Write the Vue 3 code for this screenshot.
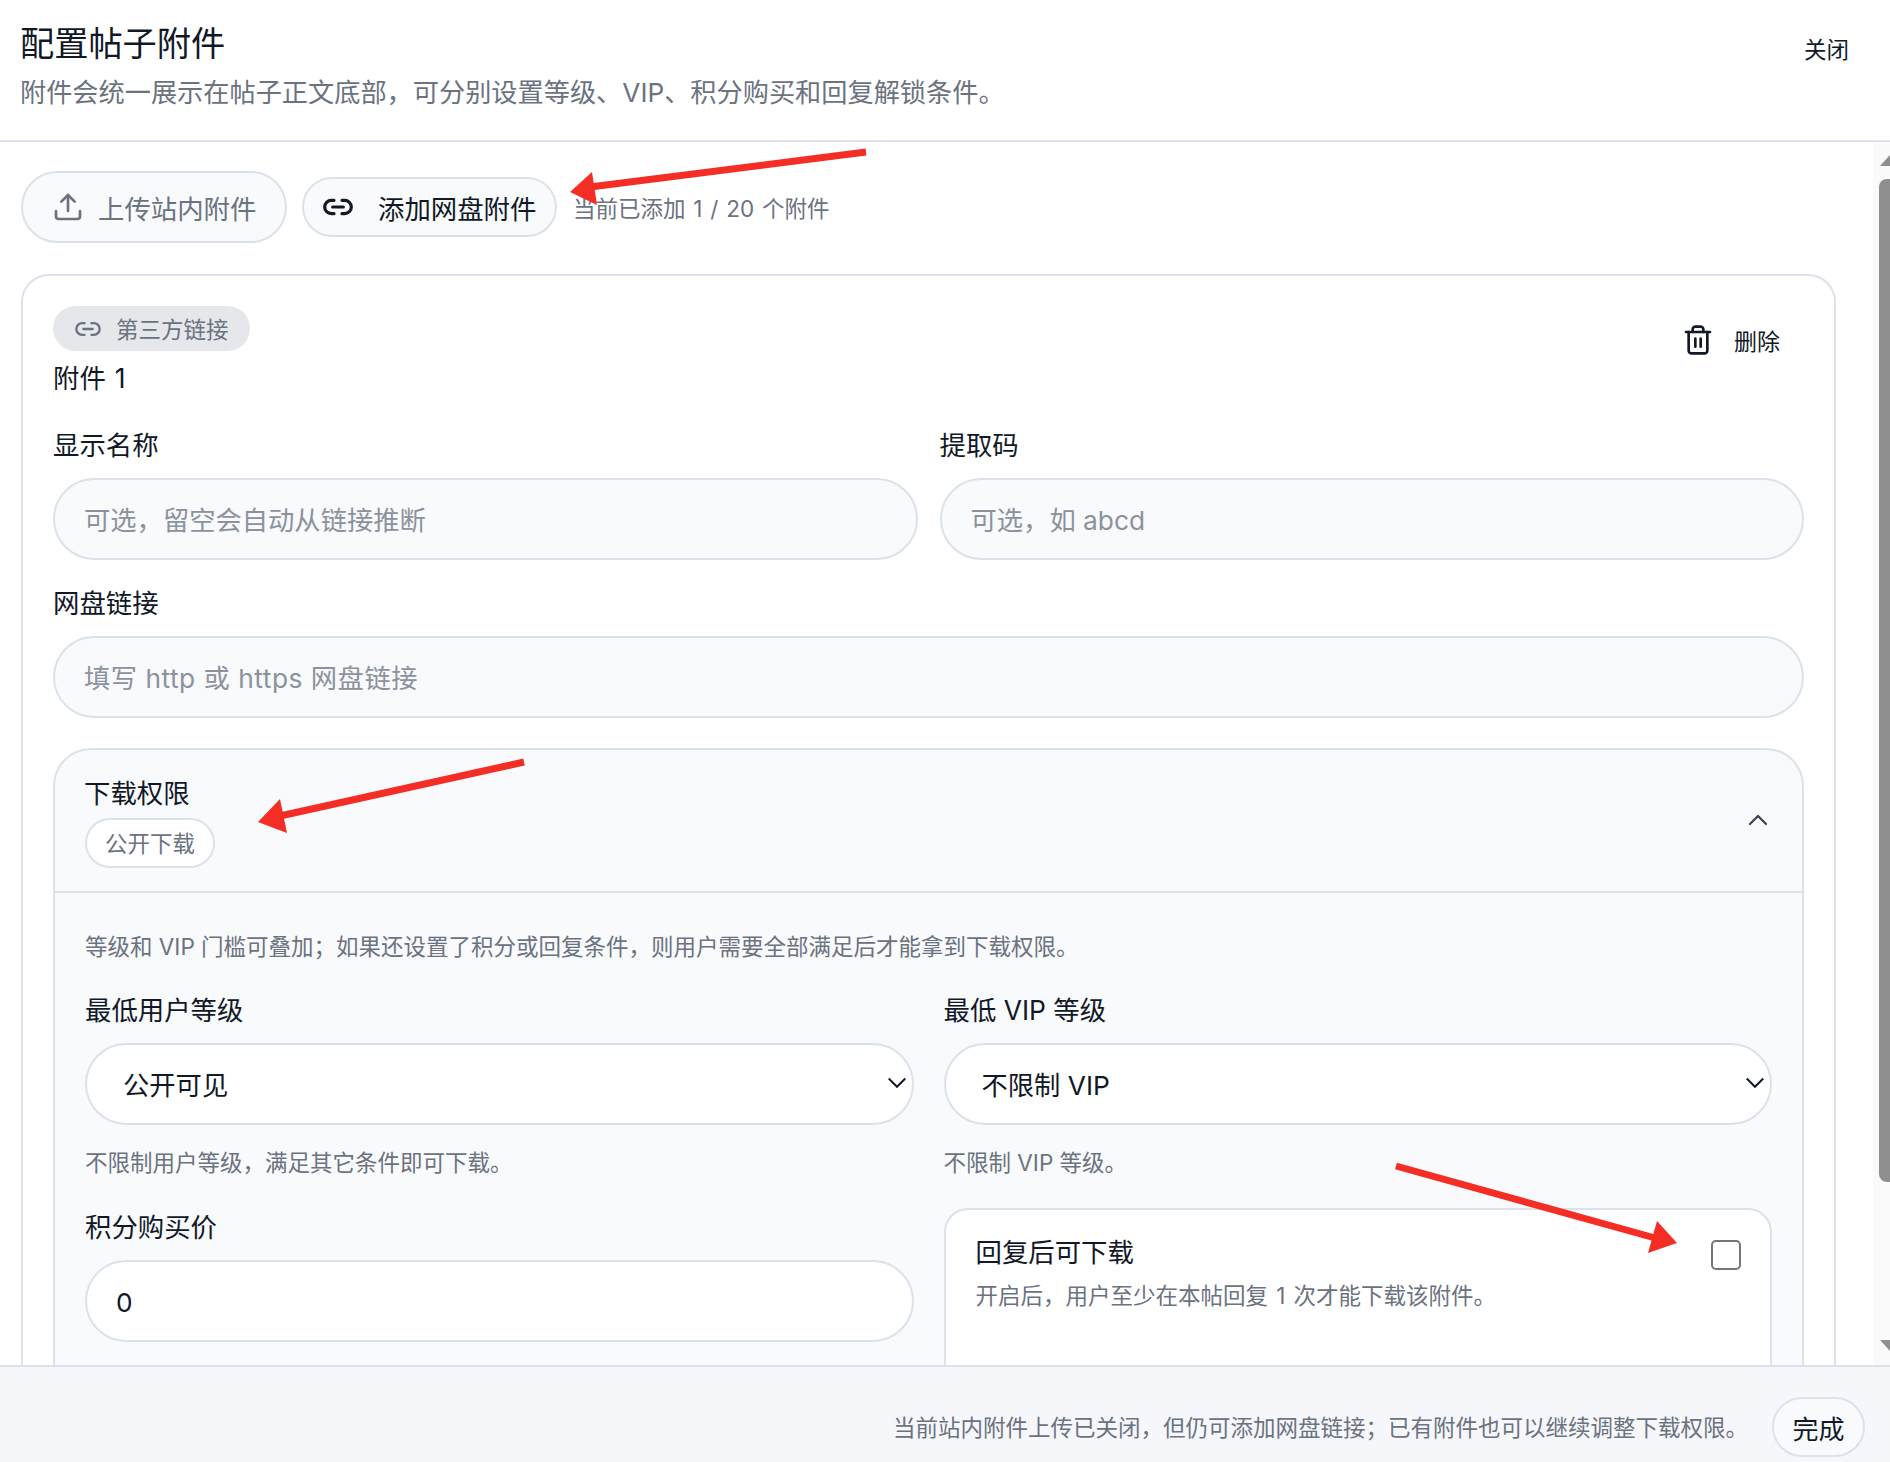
<template>
  <div class="page">
    <header class="top">
      <div>
        <h1 class="top__title">配置帖子附件</h1>
        <p class="top__desc">附件会统一展示在帖子正文底部，可分别设置等级、VIP、积分购买和回复解锁条件。</p>
      </div>
      <button class="top__close">关闭</button>
    </header>

    <div class="middle">
      <main class="scroll">
        <div class="toolbar">
          <button class="tool-btn tool-btn--upload">
            <svg class="icon32" viewBox="0 0 24 24"><path d="M21 15v4a2 2 0 0 1-2 2H5a2 2 0 0 1-2-2v-4" /><path d="M17 8l-5-5-5 5" /><path d="M12 3v12" /></svg>
            上传站内附件
          </button>
          <button class="tool-btn tool-btn--link">
            <svg class="icon32" viewBox="0 0 24 24"><path d="M9 17H7A5 5 0 0 1 7 7h2" /><path d="M15 7h2a5 5 0 1 1 0 10h-2" /><path d="M8 12h8" /></svg>
            添加网盘附件
          </button>
          <span class="toolbar__count">当前已添加 1 / 20 个附件</span>
        </div>

        <section class="card">
          <div class="card__head">
            <div>
              <span class="chip">
                <svg class="chip__icon" viewBox="0 0 24 24"><path d="M9 17H7A5 5 0 0 1 7 7h2" /><path d="M15 7h2a5 5 0 1 1 0 10h-2" /><path d="M8 12h8" /></svg>
                <span class="chip__text">第三方链接</span>
              </span>
              <p class="card__name">附件 1</p>
            </div>
            <button class="del-btn">
              <svg class="icon32" viewBox="0 0 24 24"><path d="M3 6h18" /><path d="M19 6v14c0 1-1 2-2 2H7c-1 0-2-1-2-2V6" /><path d="M8 6V4c0-1 1-2 2-2h4c1 0 2 1 2 2v2" /><path d="M10 11v6" /><path d="M14 11v6" /></svg>
              删除
            </button>
          </div>

          <div class="fields">
            <label class="field">
              <span class="field__label">显示名称</span>
              <input class="pill" placeholder="可选，留空会自动从链接推断" />
            </label>
            <label class="field">
              <span class="field__label">提取码</span>
              <input class="pill" placeholder="可选，如 abcd" />
            </label>
            <label class="field field--wide">
              <span class="field__label">网盘链接</span>
              <input class="pill pill--url" placeholder="填写 http 或 https 网盘链接" />
            </label>
          </div>

          <section class="perm">
            <div class="perm__head">
              <div>
                <p class="perm__title">下载权限</p>
                <span class="tag">公开下载</span>
              </div>
              <svg class="perm__chev" viewBox="0 0 24 24"><path d="M18 15l-6-6-6 6" /></svg>
            </div>
            <div class="perm__body">
              <p class="hint perm__hint">等级和 VIP 门槛可叠加；如果还设置了积分或回复条件，则用户需要全部满足后才能拿到下载权限。</p>
              <div class="perm__grid">
                <div class="field">
                  <span class="field__label">最低用户等级</span>
                  <div class="select-wrap">
                    <select class="pill pill--select"><option>公开可见</option></select>
                    <svg class="select-wrap__chev" viewBox="0 0 16 16"><path d="M2.500 5l5.500 5.500L13.500 5" /></svg>
                  </div>
                  <p class="hint field__hint">不限制用户等级，满足其它条件即可下载。</p>
                </div>
                <div class="field">
                  <span class="field__label">最低 VIP 等级</span>
                  <div class="select-wrap">
                    <select class="pill pill--select"><option>不限制 VIP</option></select>
                    <svg class="select-wrap__chev" viewBox="0 0 16 16"><path d="M2.500 5l5.500 5.500L13.500 5" /></svg>
                  </div>
                  <p class="hint field__hint">不限制 VIP 等级。</p>
                </div>
                <div class="field">
                  <span class="field__label">积分购买价</span>
                  <input class="pill pill--value" value="0" />
                </div>
                <div class="reply-box">
                  <div>
                    <p class="reply-box__title">回复后可下载</p>
                    <p class="hint reply-box__desc">开启后，用户至少在本帖回复 1 次才能下载该附件。</p>
                  </div>
                  <input class="check" type="checkbox" />
                </div>
              </div>
            </div>
          </section>
        </section>
      </main>

      <div class="rail">
        <span class="rail__up"></span>
        <span class="rail__thumb"></span>
        <span class="rail__down"></span>
      </div>
    </div>

    <footer class="bottom">
      <span class="bottom__text">当前站内附件上传已关闭，但仍可添加网盘链接；已有附件也可以继续调整下载权限。</span>
      <button class="bottom__done">完成</button>
    </footer>

    <!-- annotation arrows drawn on top of the screenshot -->
    <svg class="arrows" viewBox="0 0 1890 1462">
      <path d="M866 152L590 187" />
      <polygon points="570,192 592,172 597,205" />
      <path d="M524 762L280 816" />
      <polygon points="258,822 280,799 287,833" />
      <path d="M1396 1166L1655 1238" />
      <polygon points="1677,1243 1657,1221 1648,1253" />
    </svg>
  </div>
</template>

<script setup>
</script>

<style scoped>
.page {
  position: relative;
  width: 1890px;
  height: 1462px;
  display: flex;
  flex-direction: column;
  overflow: hidden;
  background: #fff;
  color: #111827;
  font-family: Inter, "Noto Sans CJK SC", sans-serif;
}
p, h1 {
  margin: 0;
}
button {
  font-family: inherit;
  cursor: pointer;
}
.icon32 {
  width: 32px;
  height: 32px;
  flex-shrink: 0;
  fill: none;
  stroke: currentColor;
  stroke-width: 2;
  stroke-linecap: round;
  stroke-linejoin: round;
}

.top {
  height: 142px;
  flex-shrink: 0;
  box-sizing: border-box;
  border-bottom: 2px solid #dde3ee;
  padding: 21px 41px 0 20px;
  display: flex;
  justify-content: space-between;
  align-items: flex-start;
}
.top__title {
  font-size: 34.2px;
  line-height: 46px;
  font-weight: 400;
}
.top__desc {
  margin-top: 8px;
  font-size: 26.2px;
  line-height: 36px;
  color: #6b7280;
}
.top__close {
  margin-top: 12px;
  padding: 0;
  border: none;
  background: none;
  font-size: 22.5px;
  line-height: 34px;
  color: #111827;
}

.middle {
  flex: 1;
  min-height: 0;
  display: flex;
}
.scroll {
  flex: 1;
  min-width: 0;
  overflow: hidden;
  padding: 29px 37px 0 21px;
}
.rail {
  width: 17px;
  flex-shrink: 0;
  display: flex;
  flex-direction: column;
  align-items: flex-end;
  background: #fafafa;
}
.rail__up, .rail__down {
  width: 0;
  height: 0;
  border-left: 10px solid transparent;
}
.rail__up {
  margin-top: 13px;
  border-bottom: 11px solid #8f8f8f;
}
.rail__down {
  margin-top: 158px;
  border-top: 11px solid #8f8f8f;
}
.rail__thumb {
  width: 11px;
  height: 1003px;
  margin-top: 13px;
  border-radius: 8px 0 0 8px;
  background: #8f8f8f;
}

.toolbar {
  display: flex;
  align-items: center;
  height: 72px;
}
.tool-btn {
  display: inline-flex;
  align-items: center;
  box-sizing: border-box;
  border: 2px solid #dbe2ec;
  background: #f8fafc;
  font-size: 26.4px;
}
.tool-btn--upload {
  height: 72px;
  width: 266px;
  padding: 0 0 0 29px;
  gap: 14px;
  border-radius: 36px;
  color: #6b7280;
}
.tool-btn--link {
  height: 60px;
  width: 255px;
  margin-left: 15px;
  padding: 0 0 0 18px;
  gap: 24px;
  border-radius: 30px;
  color: #111827;
}
.tool-btn--link .icon32 {
  stroke-width: 2.4;
}
.toolbar__count {
  margin-left: 16px;
  font-size: 22.5px;
  word-spacing: 1.5px;
  color: #6b7280;
}

.card {
  margin-top: 31px;
  border: 2px solid #dbe2ec;
  border-radius: 28px;
  padding: 30px 30px 40px 30px;
}
.card__head {
  display: flex;
  justify-content: space-between;
  align-items: flex-start;
}
.chip {
  display: inline-flex;
  align-items: center;
  height: 45px;
  padding: 0 21px;
  gap: 14px;
  border-radius: 23px;
  background: #e5e7eb;
  font-size: 22.5px;
  color: #6b7280;
}
.chip__icon {
  width: 28px;
  height: 28px;
  fill: none;
  stroke: currentColor;
  stroke-width: 2;
  stroke-linecap: round;
  stroke-linejoin: round;
}
.chip__text {
  margin-top: -2px;
}
.card__name {
  margin-top: 9px;
  font-size: 26.4px;
  line-height: 36px;
  word-spacing: 1.5px;
}
.del-btn {
  display: inline-flex;
  align-items: center;
  gap: 20px;
  margin: 17px 24px 0 0;
  padding: 0;
  border: none;
  background: none;
  font-size: 23px;
  color: #111827;
}

.fields {
  margin-top: 31px;
  display: grid;
  grid-template-columns: 1fr 1fr;
  gap: 25px 22px;
}
.field {
  display: block;
  min-width: 0;
}
.field--wide {
  grid-column: 1 / -1;
}
.field__label {
  display: block;
  margin-bottom: 14px;
  font-size: 26.4px;
  line-height: 37px;
  color: #111827;
}
.field__hint {
  margin-top: 21px;
}
.pill {
  display: block;
  width: 100%;
  height: 82px;
  box-sizing: border-box;
  border: 2px solid #dbe2ec;
  border-radius: 41px;
  padding: 2px 29px 0;
  background: #f8fafc;
  font-family: inherit;
  font-size: 26.3px;
  color: #111827;
  outline: none;
}
.pill::placeholder {
  color: #8b929e;
  opacity: 1;
}
.pill--url::placeholder {
  letter-spacing: 0.5px;
}
.pill--value {
  background: #fff;
}
.pill--select {
  appearance: none;
  padding: 2px 36px 0;
  background: #fff;
}
.select-wrap {
  position: relative;
}
.select-wrap__chev {
  position: absolute;
  right: 5px;
  top: 28px;
  width: 24px;
  height: 24px;
  fill: none;
  stroke: #111827;
  stroke-width: 1.3;
}

.perm {
  margin-top: 30px;
  border: 2px solid #dbe2ec;
  border-radius: 38px;
  background: #f8fafc;
}
.perm__head {
  display: flex;
  justify-content: space-between;
  align-items: center;
  padding: 24px 28px 23px 29px;
  border-bottom: 2px solid #dbe2ec;
}
.perm__title {
  font-size: 26.4px;
  line-height: 38px;
}
.perm__chev {
  width: 32px;
  height: 32px;
  margin-top: -2px;
  fill: none;
  stroke: #374151;
  stroke-width: 1.6;
  stroke-linecap: round;
  stroke-linejoin: round;
}
.tag {
  display: inline-flex;
  align-items: center;
  height: 50px;
  box-sizing: border-box;
  margin: 6px 0 0 1px;
  padding: 0 18px 2px;
  border: 2px solid #dbe2ec;
  border-radius: 25px;
  background: #fff;
  font-size: 22.5px;
  color: #6b7280;
}
.perm__body {
  padding: 37px 30px 40px 30px;
}
.hint {
  font-size: 22.5px;
  line-height: 34px;
  color: #6b7280;
}
.perm__grid {
  margin-top: 28px;
  display: grid;
  grid-template-columns: 1fr 1fr;
  gap: 29px 30px;
}
.reply-box {
  min-height: 200px;
  margin-top: -1px;
  box-sizing: border-box;
  border: 2px solid #dbe2ec;
  border-radius: 24px;
  background: #fff;
  padding: 24px 30px 30px 30px;
  display: flex;
  justify-content: space-between;
  align-items: flex-start;
}
.reply-box__title {
  font-size: 26.4px;
  line-height: 36px;
}
.reply-box__desc {
  margin-top: 9px;
  word-spacing: 1.8px;
}
.check {
  appearance: none;
  width: 30px;
  height: 30px;
  margin: 6px -1px 0 0;
  box-sizing: border-box;
  border: 2px solid #767676;
  border-radius: 5px;
  background: #fff;
}

.bottom {
  height: 97px;
  flex-shrink: 0;
  box-sizing: border-box;
  border-top: 2px solid #dbe2ec;
  background: #f5f7fa;
  padding: 30px 25px 0 0;
  display: flex;
  justify-content: flex-end;
  align-items: flex-start;
  gap: 24px;
}
.bottom__text {
  font-size: 22.5px;
  line-height: 62px;
  color: #6b7280;
}
.bottom__done {
  width: 93px;
  height: 60px;
  padding: 0;
  border: 2px solid #dbe2ec;
  border-radius: 30px;
  background: #f8fafc;
  font-size: 26px;
  color: #111827;
}

.arrows {
  position: absolute;
  left: 0;
  top: 0;
  width: 1890px;
  height: 1462px;
  pointer-events: none;
}
.arrows path {
  fill: none;
  stroke: #f42d25;
  stroke-width: 7;
}
.arrows polygon {
  fill: #f42d25;
}
</style>

<style>
body {
  background: #fff;
}
</style>
